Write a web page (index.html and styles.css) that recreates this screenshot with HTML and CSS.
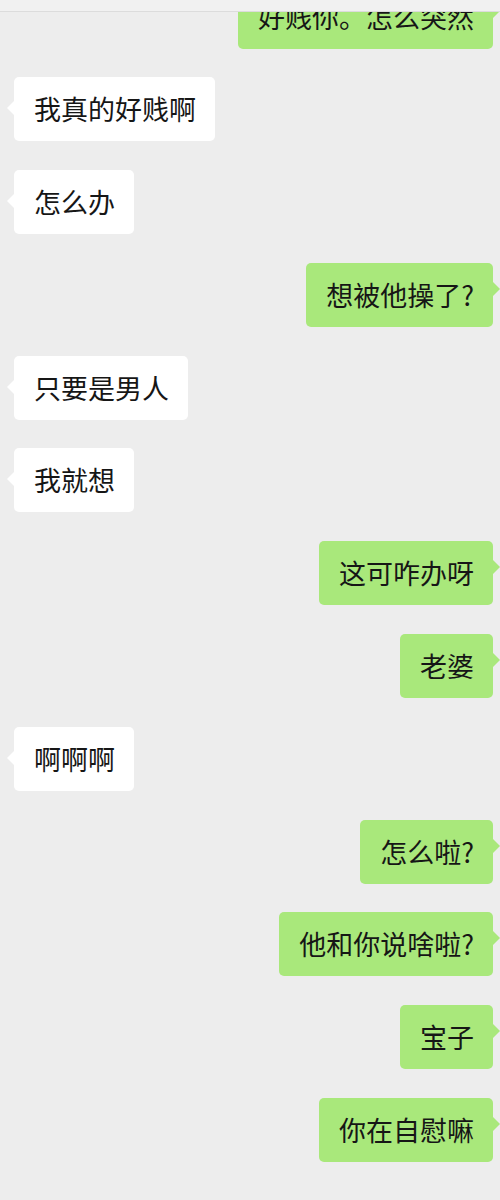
FILE: index.html
```html
<!DOCTYPE html>
<html lang="zh-CN">
<head>
    <meta charset="UTF-8">
    <meta name="viewport" content="width=device-width, initial-scale=1.0">
    <title>聊天</title>
    <link rel="stylesheet" href="styles.css">
</head>
<body>
    <div class="topbar"></div>
    <div class="chat">
        <div class="messages">
            <div class="row me"><div class="bubble">好贱你。怎么突然</div></div>
            <div class="row them"><div class="bubble">我真的好贱啊</div></div>
            <div class="row them"><div class="bubble">怎么办</div></div>
            <div class="row me"><div class="bubble">想被他操了?</div></div>
            <div class="row them"><div class="bubble">只要是男人</div></div>
            <div class="row them"><div class="bubble">我就想</div></div>
            <div class="row me"><div class="bubble">这可咋办呀</div></div>
            <div class="row me"><div class="bubble">老婆</div></div>
            <div class="row them"><div class="bubble">啊啊啊</div></div>
            <div class="row me"><div class="bubble">怎么啦?</div></div>
            <div class="row me"><div class="bubble">他和你说啥啦?</div></div>
            <div class="row me"><div class="bubble">宝子</div></div>
            <div class="row me"><div class="bubble">你在自慰嘛</div></div>
        </div>
    </div>
</body>
</html>
```

FILE: styles.css
```css
body {
    margin: 0;
    background-color: #ededed;
    font-family: "Noto Sans CJK SC", "Noto Sans", sans-serif;
    color: #161616;
}
.topbar {
    height: 11px;
    background-color: #f1f1f1;
    border-bottom: 1px solid #dcdcdc;
    position: relative;
    z-index: 1;
}
.chat {
    height: 1188px;
    overflow: hidden;
}
.messages {
    display: flex;
    flex-direction: column;
    gap: 28.8px;
    margin-top: -27.5px;
}
.row {
    display: flex;
}
.row.them {
    justify-content: flex-start;
    padding-left: 14px;
}
.row.me {
    justify-content: flex-end;
    padding-right: 7px;
}
.bubble {
    position: relative;
    height: 64px;
    box-sizing: border-box;
    padding: 16px 19px 16px 20px;
    font-size: 27px;
    line-height: 32px;
    border-radius: 5px;
    white-space: nowrap;
}
.them .bubble {
    background-color: #ffffff;
}
.me .bubble {
    background-color: #a9e87b;
}
.bubble::before {
    content: "";
    position: absolute;
    width: 0;
    height: 0;
    border-top: 7px solid transparent;
    border-bottom: 7px solid transparent;
}
.them .bubble::before {
    left: -7px;
    top: 24px;
    border-right: 7px solid #ffffff;
}
.me .bubble::before {
    right: -7px;
    top: 19px;
    border-left: 7px solid #a9e87b;
}
```
